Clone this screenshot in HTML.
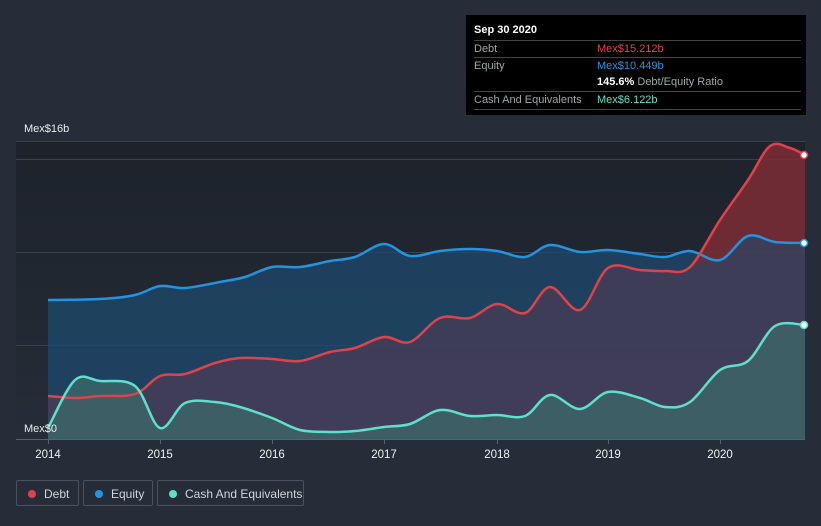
<!DOCTYPE html>
<html><head><meta charset="utf-8"><style>
body{margin:0;width:821px;height:526px;background:#262d38;font-family:"Liberation Sans",sans-serif;overflow:hidden;position:relative}
.tip{position:absolute;left:466px;top:15px;width:340px;height:100px;background:#000;color:#fff;font-size:11px}
.tip .h{position:absolute;left:8px;top:9px;font-weight:bold}
.tip .r{position:absolute;left:8px;width:327px;border-top:1px solid #444;height:17px;line-height:17px;color:#9aa}
.tip .r span{position:absolute;left:123px}
.leg{position:absolute;top:480px;height:26px;border:1px solid #4a525e;border-radius:2px;color:#d0d4da;font-size:12px;line-height:26px;box-sizing:border-box}
.leg i{position:absolute;left:11px;top:9px;width:8px;height:8px;border-radius:50%}
.leg span{position:absolute;left:27px;top:0}
</style></head><body>
<svg width="821" height="526" style="position:absolute;left:0;top:0">
<defs>
<linearGradient id="bg" x1="0" y1="0" x2="0" y2="1"><stop offset="0" stop-color="#1d222b"/><stop offset="1" stop-color="#262d38"/></linearGradient>
</defs>
<rect x="16" y="141" width="789" height="298" fill="url(#bg)"/>
<g stroke="#3a414c" stroke-width="1">
<line x1="16" y1="141.5" x2="805" y2="141.5"/><line x1="16" y1="159.5" x2="805" y2="159.5"/><line x1="16" y1="252.5" x2="805" y2="252.5"/><line x1="16" y1="345.5" x2="805" y2="345.5"/>
</g>
<path id="eqA" fill="#1e4a6e" fill-opacity="0.75"/>
<path id="dbA" fill="#5a3a52" fill-opacity="0.55"/>
<path id="redA" fill="#7a2a30" fill-opacity="0.8"/>
<path id="caA" fill="#3f6a6a" fill-opacity="0.75"/>
<g fill="none" stroke-width="2.5" stroke-linejoin="round">
<path id="eqL" stroke="#2394df"/>
<path id="dbL" stroke="#e0424c"/>
<path id="caL" stroke="#5ee0cc"/>
</g>
<circle cx="804" cy="155" r="3.5" fill="#fff" stroke="#e0424c" stroke-width="1.5"/>
<circle cx="804" cy="243" r="3.5" fill="#fff" stroke="#2394df" stroke-width="1.5"/>
<circle cx="804" cy="325" r="3.5" fill="#fff" stroke="#5ee0cc" stroke-width="1.5"/>
<line x1="16" y1="439.5" x2="805" y2="439.5" stroke="#5a616c"/>
<g stroke="#5a616c"><line x1="48.5" y1="439" x2="48.5" y2="444"/><line x1="160.5" y1="439" x2="160.5" y2="444"/><line x1="272.5" y1="439" x2="272.5" y2="444"/><line x1="384.5" y1="439" x2="384.5" y2="444"/><line x1="497.5" y1="439" x2="497.5" y2="444"/><line x1="608.5" y1="439" x2="608.5" y2="444"/><line x1="720.5" y1="439" x2="720.5" y2="444"/></g>
<g fill="#eef0f2" font-size="11.5" font-family="Liberation Sans" text-anchor="middle">
<text x="48" y="458">2014</text><text x="160" y="458">2015</text><text x="272" y="458">2016</text><text x="384" y="458">2017</text><text x="497" y="458">2018</text><text x="608" y="458">2019</text><text x="720" y="458">2020</text>
</g>
<text x="24" y="132" fill="#e8eaed" font-size="11">Mex$16b</text>
<text x="24" y="432" fill="#e8eaed" font-size="11">Mex$0</text>
</svg>
<div class="tip">
<div class="h">Sep 30 2020</div>
<div class="r" style="top:25px">Debt<span style="color:#e0424c">Mex$15.212b</span></div>
<div class="r" style="top:42px">Equity<span style="color:#2394df">Mex$10.449b</span></div>
<div class="r" style="top:59px;border-top:none"><span style="color:#9aa"><b style="color:#fff">145.6%</b> Debt/Equity Ratio</span></div>
<div class="r" style="top:76px;border-bottom:1px solid #444">Cash And Equivalents<span style="color:#5ee0cc">Mex$6.122b</span></div>
</div>
<div class="leg" style="left:16px;width:63px"><i style="background:#e0424c"></i><span>Debt</span></div>
<div class="leg" style="left:83px;width:70px"><i style="background:#2394df"></i><span>Equity</span></div>
<div class="leg" style="left:157px;width:147px"><i style="background:#5ee0cc"></i><span>Cash And Equivalents</span></div>
<script>
function P(s){return s.trim().split(/\s+/).map(function(t){return t.split(',').map(Number);});}
function smooth(p){var d='M'+p[0][0]+','+p[0][1];for(var i=0;i<p.length-1;i++){var a=p[i-1]||p[i],b=p[i],c=p[i+1],e=p[i+2]||c;var x1=b[0]+(c[0]-a[0])/6,y1=b[1]+(c[1]-a[1])/6,x2=c[0]-(e[0]-b[0])/6,y2=c[1]-(e[1]-b[1])/6;d+=' C'+x1.toFixed(1)+','+y1.toFixed(1)+' '+x2.toFixed(1)+','+y2.toFixed(1)+' '+c[0]+','+c[1];}return d;}
var eq=P("48,300 100,299 135,295 160,286 185,288 220,282 245,277 272,267 300,267 330,261 355,257 384,244 410,256 440,251 470,249 497,251 525,257 550,245 580,252 608,250 640,254 665,257 690,251 720,260 748,236 775,242 805,243");
var db=P("48,396 75,398 100,396 135,394 160,376 185,374 215,363 240,358 272,359 300,361 330,352 355,348 384,337 410,342 440,318 470,318 497,304 525,313 550,287 580,310 608,268 640,270 665,271 690,267 720,220 748,180 770,146 790,148 805,155");
var ca=P("48,428 75,380 100,381 135,386 160,428 185,403 215,402 240,407 272,418 300,430 330,432 355,431 384,427 410,424 440,410 470,416 497,415 525,416 550,395 580,409 608,392 640,398 665,407 690,402 720,370 748,361 775,326 805,325");
function set(id,a,v){document.getElementById(id).setAttribute(a,v);}
set('eqL','d',smooth(eq));set('dbL','d',smooth(db));set('caL','d',smooth(ca));
set('eqA','d',smooth(eq)+' L805,439 L48,439Z');
set('dbA','d',smooth(db)+' L805,439 L48,439Z');
set('caA','d',smooth(ca)+' L805,439 L48,439Z');
var dr=db.slice(23),er=eq.slice(23).reverse();
set('redA','d',smooth([[700,262]].concat(dr))+' L'+er.map(function(q){return q.join(',');}).join(' L')+'Z');
</script>
</body></html>
